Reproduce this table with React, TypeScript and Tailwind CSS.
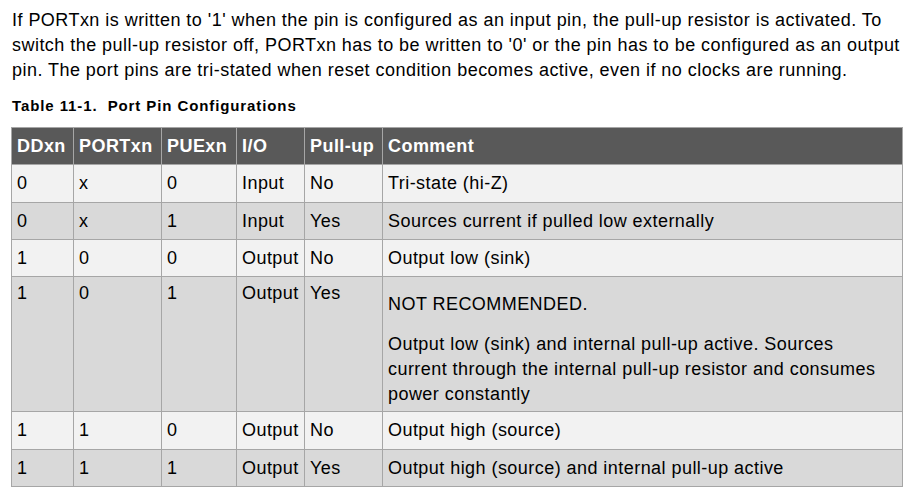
import React from "react";

const rows: { c: string[]; dark: boolean }[] = [
  { c: ["0", "x", "0", "Input", "No", "Tri-state (hi-Z)"], dark: false },
  { c: ["0", "x", "1", "Input", "Yes", "Sources current if pulled low externally"], dark: true },
  { c: ["1", "0", "0", "Output", "No", "Output low (sink)"], dark: false },
];
const rows2: { c: string[]; dark: boolean }[] = [
  { c: ["1", "1", "0", "Output", "No", "Output high (source)"], dark: false },
  { c: ["1", "1", "1", "Output", "Yes", "Output high (source) and internal pull-up active"], dark: true },
];

const cell = "border border-[#a6a6a6] pl-[5px] pr-[2px] pt-[6px] pb-[5.33px] align-top whitespace-nowrap";

function Row({ c, dark }: { c: string[]; dark: boolean }) {
  return (
    <tr className={dark ? "bg-[#d9d9d9]" : "bg-[#f2f2f2]"}>
      {c.map((t, i) => (
        <td key={i} className={cell}>
          {t}
        </td>
      ))}
    </tr>
  );
}

export default function App() {
  const heads = ["DDxn", "PORTxn", "PUExn", "I/O", "Pull-up", "Comment"];
  return (
    <div
      className="w-[915px] h-[500px] bg-white text-black overflow-hidden"
      style={{ fontFamily: '"Liberation Sans", Arial, sans-serif' }}
    >
      <p className="pl-[12px] pt-[7.5px] text-[18px] leading-[25px] tracking-[0.46px] whitespace-nowrap">
        If PORTxn is written to '1' when the pin is configured as an input pin, the pull-up resistor is activated. To
        <br />
        switch the pull-up resistor off, PORTxn has to be written to '0' or the pin has to be configured as an output
        <br />
        pin. The port pins are tri-stated when reset condition becomes active, even if no clocks are running.
      </p>
      <p className="pl-[12px] mt-[13px] text-[15px] leading-[20px] font-bold tracking-[0.9px] whitespace-nowrap">
        Table 11-1.{"\u00a0 "}Port Pin Configurations
      </p>
      <table className="ml-[11px] mt-[11.5px] w-[892px] table-fixed border-collapse text-[18px] leading-[25px] tracking-[0.45px]">
        <colgroup>
          <col className="w-[62px]" />
          <col className="w-[88px]" />
          <col className="w-[75px]" />
          <col className="w-[68px]" />
          <col className="w-[78px]" />
          <col />
        </colgroup>
        <thead>
          <tr className="bg-[#595959] text-white font-bold">
            {heads.map((h) => (
              <th key={h} className={cell + " text-left font-bold"}>
                {h}
              </th>
            ))}
          </tr>
        </thead>
        <tbody>
          {rows.map((r, i) => (
            <Row key={i} c={r.c} dark={r.dark} />
          ))}
          <tr className="bg-[#d9d9d9]">
            {["1", "0", "1", "Output", "Yes"].map((t, i) => (
              <td key={i} className="border border-[#a6a6a6] pl-[5px] pr-[2px] pt-[4px] pb-[4px] align-top whitespace-nowrap">
                {t}
              </td>
            ))}
            <td className="border border-[#a6a6a6] pl-[5px] pr-[2px] pt-[4px] pb-[4px] align-top whitespace-nowrap">
              <p className="mt-[11px]">NOT RECOMMENDED.</p>
              <p className="mt-[15px]">
                Output low (sink) and internal pull-up active. Sources
                <br />
                current through the internal pull-up resistor and consumes
                <br />
                power constantly
              </p>
            </td>
          </tr>
          {rows2.map((r, i) => (
            <Row key={i} c={r.c} dark={r.dark} />
          ))}
        </tbody>
      </table>
    </div>
  );
}
